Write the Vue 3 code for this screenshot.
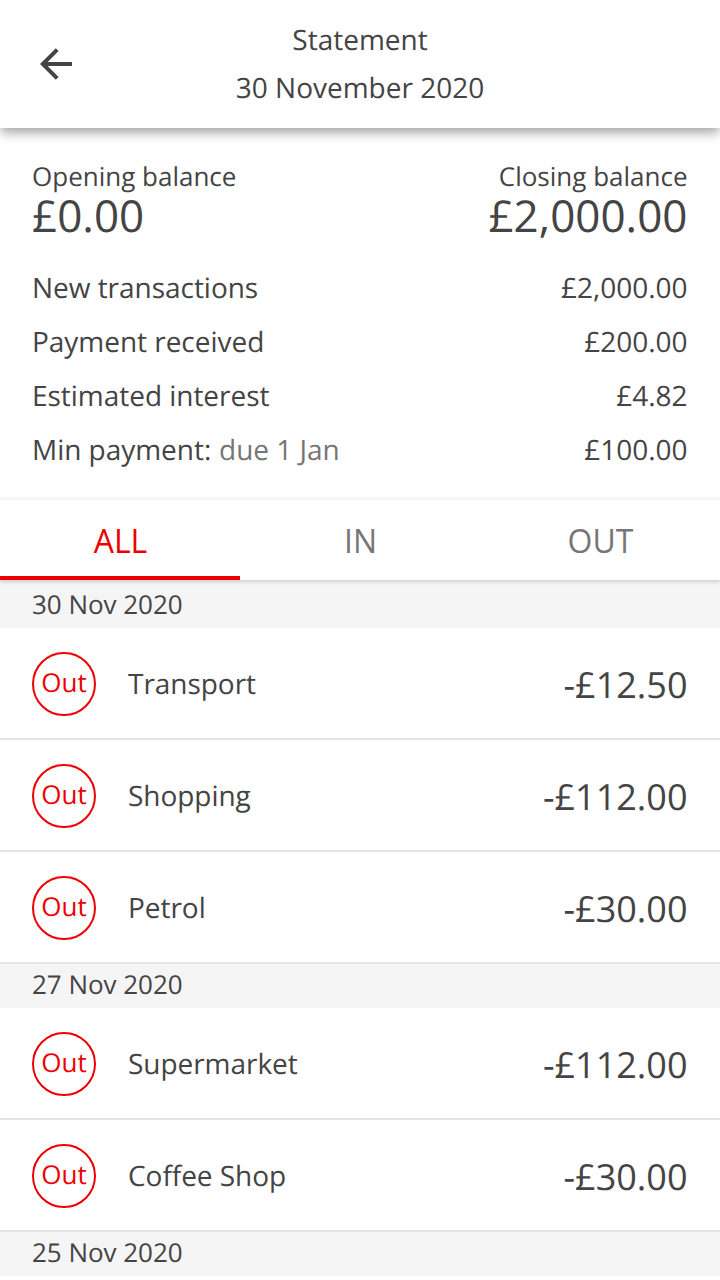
<script setup>
const summary = [
  { label: 'New transactions', value: '£2,000.00' },
  { label: 'Payment received', value: '£200.00' },
  { label: 'Estimated interest', value: '£4.82' },
  { label: 'Min payment:', note: 'due 1 Jan', value: '£100.00' },
]
const tabs = ['ALL', 'IN', 'OUT']
const groups = [
  { date: '30 Nov 2020', items: [['Transport', '-£12.50'], ['Shopping', '-£112.00'], ['Petrol', '-£30.00']] },
  { date: '27 Nov 2020', items: [['Supermarket', '-£112.00'], ['Coffee Shop', '-£30.00']] },
  { date: '25 Nov 2020', items: [] },
]
</script>

<template>
  <main class="screen">
    <header class="header">
      <button class="back" aria-label="Back">
        <svg width="32" height="32" viewBox="0 0 32 32" fill="none" stroke="#444" stroke-width="4">
          <path d="M17.2 1.6 2.8 16l14.4 14.4M3 16H32" />
        </svg>
      </button>
      <h1 class="title">Statement<br />30 November 2020</h1>
    </header>
    <section class="summary">
      <div class="balances">
        <div><div class="caption">Opening balance</div><div class="balance">£0.00</div></div>
        <div class="right"><div class="caption">Closing balance</div><div class="balance">£2,000.00</div></div>
      </div>
      <div v-for="row in summary" :key="row.label" class="row">
        <span>{{ row.label }} <span v-if="row.note" class="note">{{ row.note }}</span></span>
        <span>{{ row.value }}</span>
      </div>
    </section>
    <nav class="tabs">
      <button v-for="(tab, i) in tabs" :key="tab" class="tab" :class="{ active: i === 0 }">{{ tab }}</button>
    </nav>
    <section v-for="(group, i) in groups" :key="group.date" class="group">
      <h2 class="date" :class="{ first: i === 0 }">{{ group.date }}</h2>
      <div v-for="[name, amount] in group.items" :key="name" class="item">
        <span class="badge">Out</span>
        <span class="name">{{ name }}</span>
        <span class="amount">{{ amount }}</span>
      </div>
    </section>
  </main>
</template>

<style>
body { background: #fff; }
</style>

<style scoped>
* { box-sizing: border-box; }
.screen { width: 720px; height: 1280px; overflow: hidden; color: #444; font-family: "Open Sans", "Noto Sans", sans-serif; font-size: 28px; text-rendering: geometricPrecision; }
button { border: 0; padding: 0; background: none; font: inherit; color: inherit; }
.header { height: 128px; display: grid; grid-template-columns: 88px 1fr 88px; align-items: center; box-shadow: 0 6px 10px -1px rgba(0, 0, 0, .35); }
.back { margin-left: 40px; width: 32px; height: 32px; }
.back svg { display: block; }
.title { margin: 0; font-size: 28px; font-weight: 400; line-height: 48px; text-align: center; }
.summary { height: 370px; padding: 31px 32.5px 0 32px; }
.balances { display: flex; justify-content: space-between; height: 102px; }
.right { text-align: right; }
.caption { font-size: 26px; line-height: 34px; }
.balance { font-size: 44px; line-height: 44px; }
.row { display: flex; justify-content: space-between; line-height: 54px; letter-spacing: -.03px; }
.note { color: #767676; margin-left: .6px; }
.tabs { height: 82px; display: flex; border-top: 2px solid #f5f5f5; position: relative; box-shadow: 0 2px 4px rgba(0, 0, 0, .16); }
.tab { flex: 1; padding: 4px 0 0 1px; font-size: 32px; color: #767676; border-bottom: 4px solid transparent; }
.active { color: #ec0000; border-color: #ec0000; }
.date { margin: 0; height: 44px; padding: 0 32px; background: #f5f5f5; font-size: 26px; font-weight: 400; line-height: 40px; letter-spacing: -.03px; }
.first { height: 48px; line-height: 48px; }
.item { height: 112px; display: flex; align-items: center; padding: 2px 32.5px 0 32px; border-bottom: 2px solid #e3e3e3; }
.badge { width: 64px; height: 64px; border: 2px solid #ec0000; border-radius: 50%; color: #ec0000; font-size: 26px; line-height: 57px; text-align: center; }
.name { margin-left: 32px; flex: 1; letter-spacing: -.04px; }
.amount { font-size: 36px; }
</style>
